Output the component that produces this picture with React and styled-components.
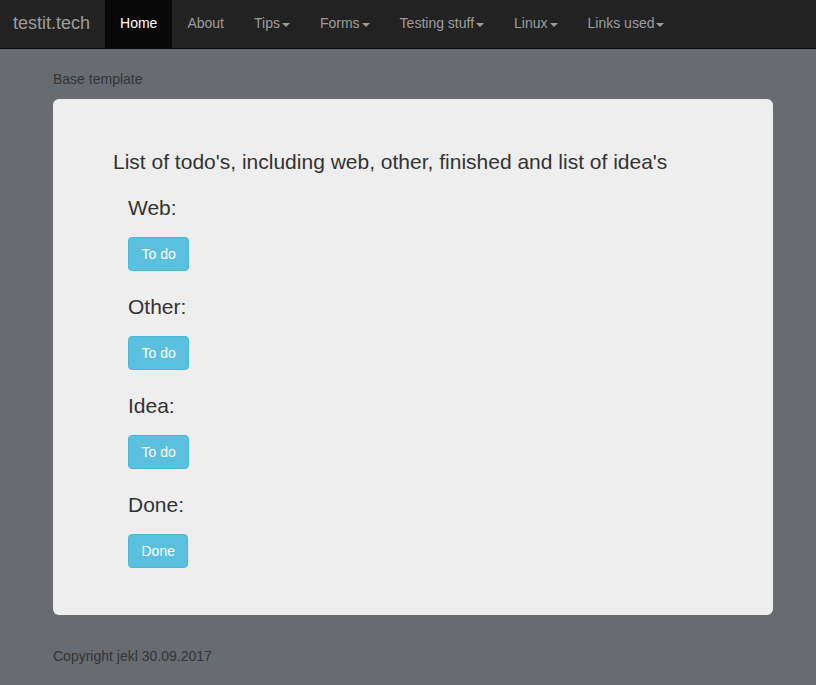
import React from "react";
import styled, { createGlobalStyle } from "styled-components";

const Global = createGlobalStyle`
  html, body { margin: 0; padding: 0; }
  body {
    background: #686b70;
    font-family: "Liberation Sans", Arial, sans-serif;
    font-size: 14px;
    line-height: 1.42857;
    color: #333;
  }
`;

const Navbar = styled.nav`
  height: 48px;
  background: #222;
  border-bottom: 1px solid #080808;
  display: flex;
  align-items: stretch;
`;

const Brand = styled.a`
  display: flex;
  align-items: center;
  padding: 0 15px 0 13px;
  font-size: 18px;
  color: #9d9d9d;
  text-decoration: none;
`;

const NavList = styled.ul`
  list-style: none;
  margin: 0;
  padding: 0;
  display: flex;
`;

const NavItem = styled.li`
  display: flex;
  align-items: center;
  padding: 0 15px;
  color: ${(p) => (p.$active ? "#fff" : "#9d9d9d")};
  background: ${(p) => (p.$active ? "#080808" : "transparent")};
`;

const Caret = styled.span`
  display: inline-block;
  width: 0;
  height: 0;
  margin-left: 2px;
  margin-top: 1px;
  border-top: 4px solid #9d9d9d;
  border-left: 4px solid transparent;
  border-right: 4px solid transparent;
`;

const Container = styled.div`
  width: 720px;
  margin: 0 auto 0 53px;
`;

const Crumb = styled.div`
  margin-top: 20px;
  height: 20px;
  line-height: 20px;
  color: #333;
`;

const Jumbo = styled.div`
  margin-top: 10px;
  background: #eee;
  border-radius: 6px;
  padding: 48px 60px 47px;
`;

const Title = styled.p`
  margin: 0;
  font-size: 21px;
  line-height: 30px;
  color: #333;
`;

const Section = styled.div`
  padding-left: 15px;
  margin-top: ${(p) => (p.$first ? "20px" : "25px")};
`;

const SectionHead = styled.h3`
  margin: 0 0 18px;
  font-size: 21px;
  font-weight: normal;
  line-height: 22px;
  color: #333;
`;

const InfoButton = styled.button`
  display: block;
  height: 34px;
  padding: 6px 12.5px;
  font-family: inherit;
  font-size: 14px;
  line-height: 20px;
  color: #fff;
  background: #5bc0de;
  border: 1px solid #46b8da;
  border-radius: 4px;
  cursor: pointer;
`;

const Footer = styled.footer`
  margin-top: 31px;
  line-height: 20px;
  color: #333;
`;

const navs = [
  { label: "Home", active: true },
  { label: "About" },
  { label: "Tips", caret: true },
  { label: "Forms", caret: true },
  { label: "Testing stuff", caret: true },
  { label: "Linux", caret: true },
  { label: "Links used", caret: true },
];

const sections = [
  { head: "Web:", btn: "To do" },
  { head: "Other:", btn: "To do" },
  { head: "Idea:", btn: "To do" },
  { head: "Done:", btn: "Done" },
];

export default function App() {
  return (
    <>
      <Global />
      <Navbar>
        <Brand href="#">testit.tech</Brand>
        <NavList>
          {navs.map((n) => (
            <NavItem key={n.label} $active={n.active}>
              {n.label}
              {n.caret && <Caret />}
            </NavItem>
          ))}
        </NavList>
      </Navbar>
      <Container>
        <Crumb>Base template</Crumb>
        <Jumbo>
          <Title>List of todo's, including web, other, finished and list of idea's</Title>
          {sections.map((s, i) => (
            <Section key={s.head} $first={i === 0}>
              <SectionHead>{s.head}</SectionHead>
              <InfoButton>{s.btn}</InfoButton>
            </Section>
          ))}
        </Jumbo>
        <Footer>Copyright jekl 30.09.2017</Footer>
      </Container>
    </>
  );
}
